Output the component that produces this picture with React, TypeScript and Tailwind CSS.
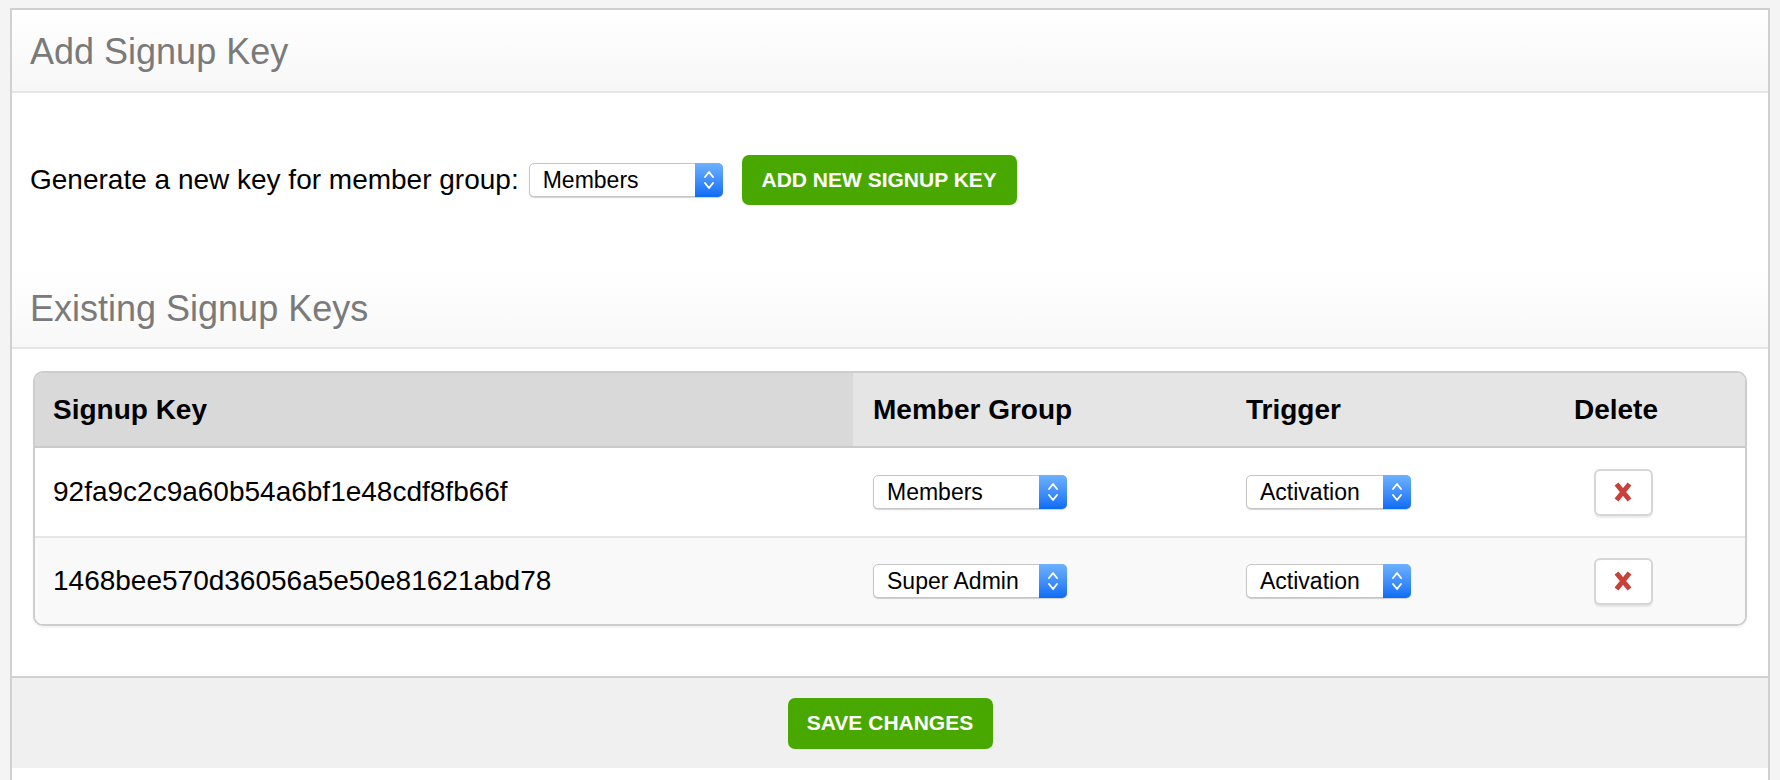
import React from "react"

interface SignupKey {
    key: string
    group: string
    trigger: string
}

const keys: SignupKey[] = [
    { key: "92fa9c2c9a60b54a6bf1e48cdf8fb66f", group: "Members", trigger: "Activation" },
    { key: "1468bee570d36056a5e50e81621abd78", group: "Super Admin", trigger: "Activation" },
]

function Chevrons() {
    return (
        <svg width="14" height="26" viewBox="0 0 14 26" fill="none" stroke="white" strokeWidth="1.9" strokeLinecap="round" strokeLinejoin="round">
            <path d="M3 10 L7 5 L11 10" />
            <path d="M3 16 L7 21 L11 16" />
        </svg>
    )
}

function Select({ value, wide }: { value: string; wide?: boolean }) {
    return (
        <div
            className={`flex h-[34px] items-stretch rounded-[5px] border border-[#c6c6c6] bg-white shadow-[0_1px_1px_rgba(0,0,0,0.18)] ${wide ? "w-[194px]" : "w-[165px]"}`}
        >
            <span className="flex flex-1 items-center pl-[13px] text-[23px] text-black">{value}</span>
            <span className="-my-px -mr-px flex w-[28px] items-center justify-center rounded-r-[5px] bg-gradient-to-b from-[#6db1ff] to-[#0a6cf4]">
                <Chevrons />
            </span>
        </div>
    )
}

function DeleteButton() {
    return (
        <button className="flex h-[47px] w-[59px] items-center justify-center rounded-[6px] border-2 border-[#d6d6d6] bg-white shadow-[0_2px_1px_rgba(0,0,0,0.08)]">
            <svg width="20" height="22" viewBox="0 0 20 22">
                <path d="M3.5 3 L16.5 19 M16.5 3 L3.5 19" stroke="#c9403b" strokeWidth="5" strokeLinecap="butt" />
            </svg>
        </button>
    )
}

export default function App() {
    return (
        <div className="min-h-screen bg-[#f4f4f4] px-[10px] pt-[8px] font-['Liberation_Sans',Arial,sans-serif]">
            <div className="border-2 border-b-0 border-[#d0d0d0] bg-white">
                <div className="flex h-[83px] items-center border-b-2 border-[#e6e6e6] bg-gradient-to-b from-white to-[#f7f7f7] px-[18px] pt-[3px]">
                    <h2 className="text-[36px] font-normal text-[#7a7a7a]">Add Signup Key</h2>
                </div>

                <div className="flex items-center gap-[19px] px-[18px] pt-[62px] pb-[62px]">
                    <div className="flex items-center gap-[10px]">
                        <span className="text-[28px] text-black">Generate a new key for member group:</span>
                        <Select value="Members" wide />
                    </div>
                    <button className="h-[50px] w-[275px] rounded-[7px] bg-[#49a800] text-[21px] font-bold text-white">ADD NEW SIGNUP KEY</button>
                </div>

                <div className="flex h-[82px] items-center border-b-2 border-[#e6e6e6] bg-gradient-to-b from-white to-[#f8f8f8] px-[18px] pt-[3px]">
                    <h2 className="text-[36px] font-normal text-[#7a7a7a]">Existing Signup Keys</h2>
                </div>

                <div className="px-[21px] pt-[22px] pb-[50px]">
                    <div className="overflow-hidden rounded-[10px] border-2 border-[#cdcdcd] shadow-[0_2px_2px_rgba(0,0,0,0.05)]">
                        <div className="grid h-[75px] grid-cols-[818px_373px_271px_1fr] border-b-2 border-[#cacaca] bg-[#e5e5e5] text-[28px] font-bold text-black">
                            <div className="flex items-center bg-[#d9d9d9] pl-[18px]">Signup Key</div>
                            <div className="flex items-center pl-[20px]">Member Group</div>
                            <div className="flex items-center pl-[20px]">Trigger</div>
                            <div className="flex items-center justify-center pr-[10px]">Delete</div>
                        </div>
                        {keys.map((k, i) => (
                            <div
                                key={k.key}
                                className={`grid h-[88px] grid-cols-[818px_373px_271px_1fr] ${i > 0 ? "border-t-2 border-[#e6e6e6] bg-[#f9f9f9]" : "bg-white"}`}
                            >
                                <div className="flex items-center pl-[18px] text-[28px] text-black">{k.key}</div>
                                <div className="flex items-center pl-[20px]">
                                    <Select value={k.group} wide />
                                </div>
                                <div className="flex items-center pl-[20px]">
                                    <Select value={k.trigger} />
                                </div>
                                <div className="flex items-center justify-center pl-[4px]">
                                    <DeleteButton />
                                </div>
                            </div>
                        ))}
                    </div>
                </div>

                <div className="flex h-[92px] items-center justify-center border-t-2 border-[#d0d0d0] bg-[#f0f0f0]">
                    <button className="h-[51px] w-[205px] rounded-[7px] bg-[#49a800] text-[21px] font-bold text-white">SAVE CHANGES</button>
                </div>
                <div className="h-[20px] bg-white" />
            </div>
        </div>
    )
}
